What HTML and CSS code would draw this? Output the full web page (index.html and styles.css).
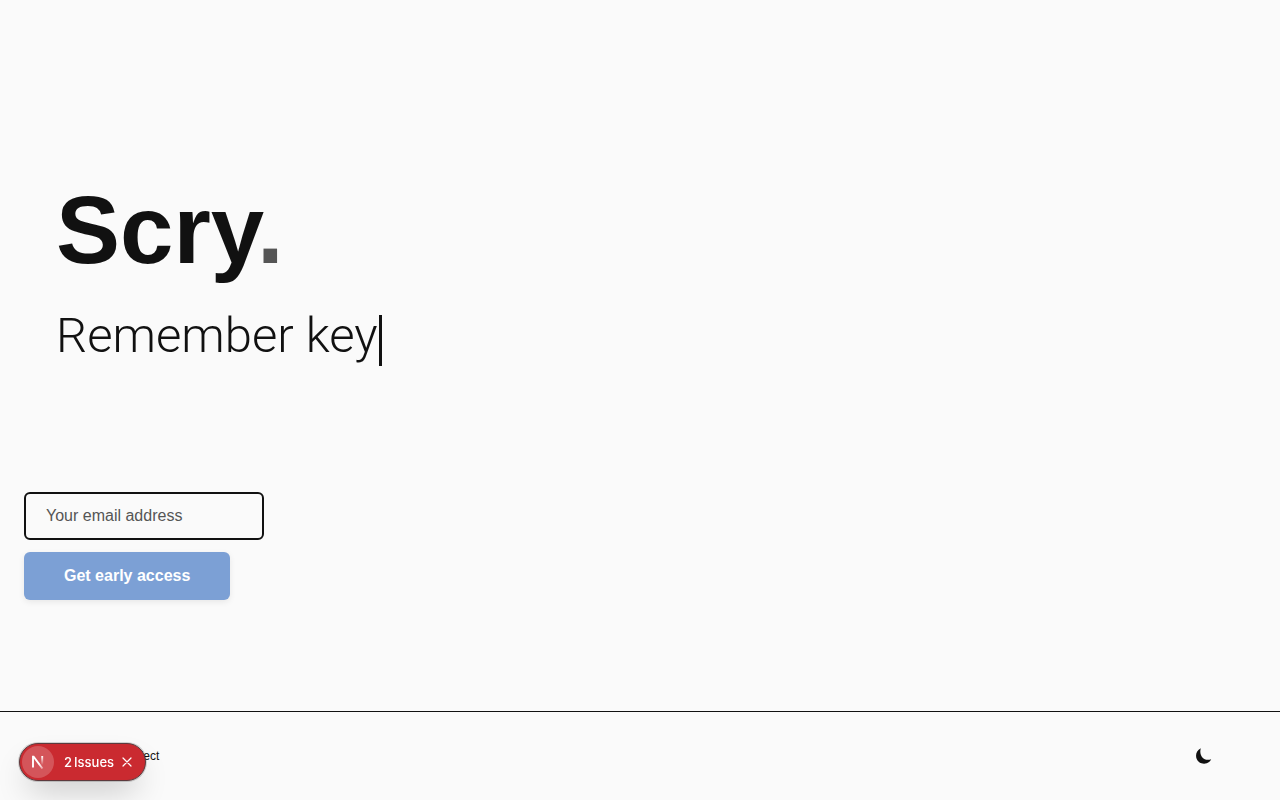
FILE: index.html
```html
<!DOCTYPE html>
<html lang="en">
<head>
<meta charset="utf-8">
<meta name="viewport" content="width=device-width, initial-scale=1">
<title>Scry</title>
<link rel="stylesheet" href="styles.css">
</head>
<body>
<main class="hero">
  <div class="intro">
    <h1 class="title">Scry<span class="dot">.</span></h1>
    <p class="tagline">Remember key<span class="caret"></span></p>
  </div>
  <form class="signup">
    <input class="email" type="email" placeholder="Your email address" aria-label="Your email address">
    <button class="submit" type="submit">Get early access</button>
  </form>
</main>
<footer class="footer">
  <a class="link" href="#">Project</a>
  <button class="theme" type="button" aria-label="Toggle theme">
    <svg width="16" height="16" viewBox="0 0 16 16"><path d="M4.800 0.300C-1 3-1.200 10.300 2.700 13.700C6.800 17.300 13.200 15.800 15.200 11.200C8 14 2.600 7.500 4.800 0.300Z" fill="#111"/></svg>
  </button>
</footer>
<aside class="issues">
  <span class="logo">
    <svg width="14" height="14" viewBox="0 0 14 14" fill="none">
      <defs>
        <linearGradient id="diag" x1="8" y1="9" x2="13" y2="14" gradientUnits="userSpaceOnUse"><stop stop-color="#fff"/><stop offset="1" stop-color="#fff" stop-opacity="0.300"/></linearGradient>
        <linearGradient id="stem" x1="0" y1="1" x2="0" y2="10" gradientUnits="userSpaceOnUse"><stop stop-color="#fff"/><stop offset="1" stop-color="#fff" stop-opacity="0"/></linearGradient>
      </defs>
      <path d="M2 12.500V1.600H2.600L11.500 13.500" stroke="url(#diag)" stroke-width="1.900"/>
      <path d="M11.200 1V10" stroke="url(#stem)" stroke-width="1.900"/>
    </svg>
  </span>
  <button class="count" type="button"><span>2</span><span>Issues</span></button>
  <button class="close" type="button" aria-label="Close">
    <svg width="10" height="10" viewBox="0 0 10 10"><path d="M1 1L9 9M9 1L1 9" stroke="#fff" stroke-width="1.200" stroke-linecap="round"/></svg>
  </button>
</aside>
</body>
</html>
```
FILE: styles.css
```css
* { box-sizing: border-box; }
body {
  margin: 0;
  min-height: 100vh;
  display: flex;
  flex-direction: column;
  background: #fafafa;
  color: #111;
  font-family: "Liberation Sans", Arial, sans-serif;
}
button { border: 0; padding: 0; background: none; font: inherit; color: inherit; cursor: pointer; }
svg { display: block; }
.hero {
  flex: 1;
  display: flex;
  flex-direction: column;
  justify-content: flex-end;
  gap: 126px;
  padding: 0 24px 111px;
}
.intro { padding-left: 32px; }
.title { margin: 0 0 20px; font-size: 96px; line-height: 112px; font-weight: 700; }
.dot { color: #555; }
.tagline {
  margin: 0;
  display: flex;
  align-items: flex-end;
  font-family: Roboto, "Liberation Sans", sans-serif;
  font-size: 49px;
  line-height: 60px;
  font-weight: 300;
}
.caret { width: 3px; height: 51px; margin-left: 1px; background: #111; }
.signup { display: flex; flex-direction: column; align-items: flex-start; gap: 12px; }
.email {
  width: 240px;
  height: 48px;
  padding: 0 20px;
  border: 2px solid #111;
  border-radius: 6px;
  background: transparent;
  color: #111;
  font: 16px "Liberation Sans", Arial, sans-serif;
}
.email::placeholder { color: #555; opacity: 1; }
.submit {
  height: 48px;
  padding: 0 40px;
  border-radius: 6px;
  background: #7ca0d5;
  color: #fff;
  font-size: 16px;
  font-weight: 700;
  box-shadow: 0 2px 6px rgba(0, 0, 0, 0.08);
}
.footer {
  display: flex;
  align-items: center;
  justify-content: space-between;
  height: 89px;
  padding: 0 68px 0 122px;
  border-top: 1px solid #111;
}
.link { color: #111; font-size: 12px; text-decoration: none; }
.theme { width: 16px; height: 16px; }
.issues {
  position: fixed;
  left: 19px;
  bottom: 19px;
  display: flex;
  align-items: center;
  width: 127px;
  height: 38px;
  padding: 0 13px 0 2px;
  border: 1px solid #5c3a3d;
  border-radius: 19px;
  background: #ca2a30;
  color: #fff;
  box-shadow: 0 0 0 1px rgba(0, 0, 0, 0.16), 0 16px 32px -8px rgba(0, 0, 0, 0.24);
}
.logo {
  display: grid;
  place-items: center;
  width: 32px;
  height: 32px;
  border-radius: 50%;
  background: #d4555a;
}
.count {
  display: flex;
  gap: 2px;
  margin-left: 10px;
  font-family: Inter, sans-serif;
  font-size: 13px;
  line-height: 16px;
  font-weight: 500;
}
.close { margin-left: auto; }
```
